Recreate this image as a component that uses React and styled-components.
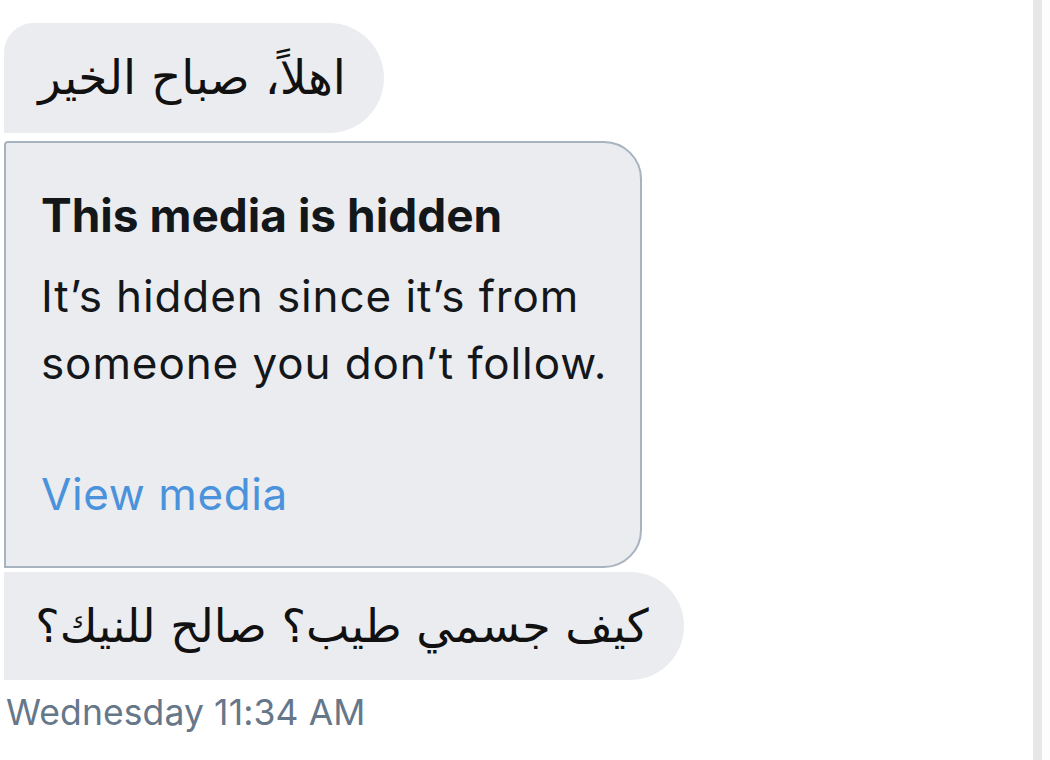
import React from 'react';
import styled, { createGlobalStyle } from 'styled-components';

const GlobalStyle = createGlobalStyle`
  html, body {
    margin: 0;
    padding: 0;
    background: #ffffff;
  }
  body {
    font-family: Inter, "Noto Sans", "DejaVu Sans", sans-serif;
    color: #14171a;
  }
`;

const Screen = styled.div`
  width: 1050px;
  height: 760px;
  overflow: hidden;
  display: grid;
  grid-template-columns: 1033px 9px 1fr;
  background: #ffffff;
`;

const Thread = styled.div`
  display: flex;
  flex-direction: column;
  align-items: flex-start;
  padding: 23px 0 0 4px;
`;

const Rail = styled.div`
  background: #e7e7e7;
`;

const Edge = styled.div`
  background: #fdfdfd;
`;

const Bubble = styled.div`
  box-sizing: border-box;
  height: ${(p) => p.h}px;
  width: ${(p) => p.w}px;
  margin-top: ${(p) => p.gap || 0}px;
  display: flex;
  align-items: center;
  justify-content: center;
  background: #ebecef;
  border-radius: ${(p) => (p.first ? 30 : 0)}px 56px 56px 0;
  direction: rtl;
  font-family: "DejaVu Sans", sans-serif;
  font-size: ${(p) => p.size}px;
  line-height: 60px;
  color: #111111;
  padding-right: ${(p) => p.pr || 0}px;
`;

const Card = styled.div`
  box-sizing: border-box;
  width: 638px;
  height: 427px;
  margin-top: 8px;
  background: #ebecef;
  border: 2px solid #a8b3c0;
  border-radius: 4px 38px 38px 0;
  padding: 44px 0 0 35px;
  display: flex;
  flex-direction: column;
  align-items: flex-start;
`;

const Title = styled.div`
  font-family: Inter, "Liberation Sans", sans-serif;
  font-weight: 700;
  font-size: 46px;
  line-height: 56px;
  color: #14171a;
`;

const Body = styled.div`
  margin-top: 20px;
  font-family: Inter, "Liberation Sans", sans-serif;
  font-size: 44px;
  line-height: 67px;
  letter-spacing: 0.9px;
  color: #14171a;
`;

const Link = styled.a`
  margin-top: 69px;
  font-family: Inter, "Liberation Sans", sans-serif;
  font-size: 44px;
  line-height: 56px;
  letter-spacing: 0.6px;
  color: #4a93dc;
  text-decoration: none;
`;

const Stamp = styled.div`
  margin: 13px 0 0 2px;
  font-family: Inter, "Liberation Sans", sans-serif;
  font-size: 35.5px;
  line-height: 40px;
  letter-spacing: 0.1px;
  color: #66778a;
`;

export default function App() {
  return (
    <>
      <GlobalStyle />
      <Screen>
        <Thread>
          <Bubble first w={380} h={110} pr={4} size={47}>
            اهلاً، صباح الخير
          </Bubble>
          <Card>
            <Title>This media is hidden</Title>
            <Body>
              It’s hidden since it’s from
              <br />
              someone you don’t follow.
            </Body>
            <Link href="#">View media</Link>
          </Card>
          <Bubble gap={4} w={680} h={108} pr={4} size={46}>
            كيف جسمي طيب؟ صالح للنيك؟
          </Bubble>
          <Stamp>Wednesday 11:34 AM</Stamp>
        </Thread>
        <Rail />
        <Edge />
      </Screen>
    </>
  );
}
